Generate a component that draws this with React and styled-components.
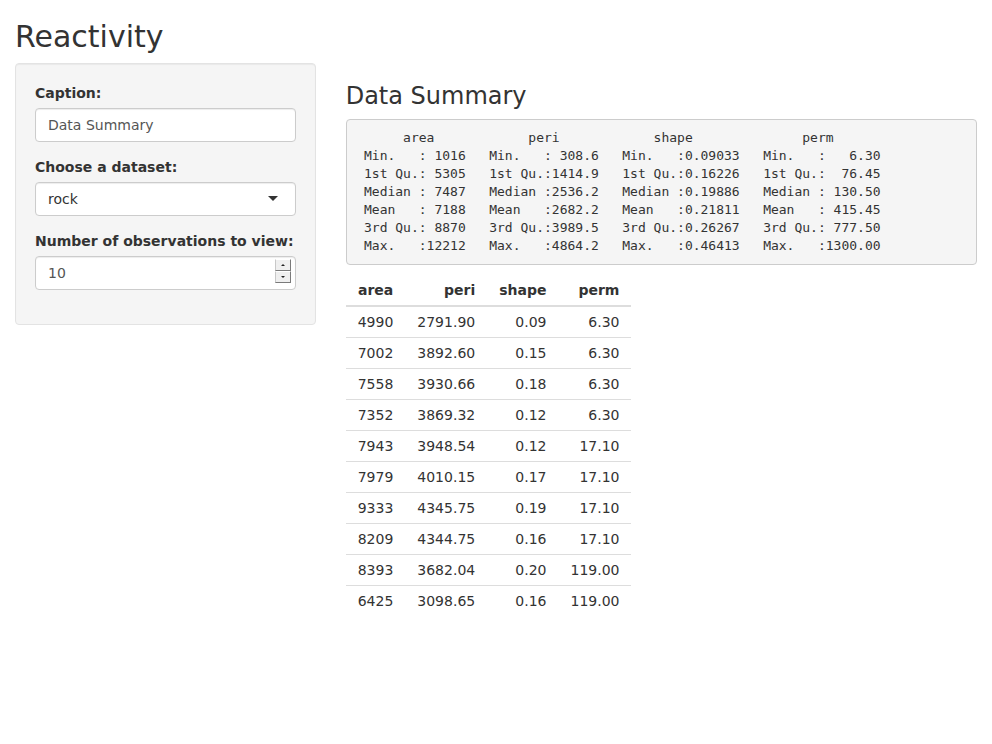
import React from 'react';
import styled, { createGlobalStyle } from 'styled-components';

const GlobalStyle = createGlobalStyle`
  * {
    box-sizing: border-box;
  }
  body {
    margin: 0;
    background: #fff;
    color: #333;
    font-family: "DejaVu Sans", "Liberation Sans", sans-serif;
    font-size: 14px;
    line-height: 1.42857143;
  }
`;

const summaryText = [
  '      area            peri            shape              perm        ',
  ' Min.   : 1016   Min.   : 308.6   Min.   :0.09033   Min.   :   6.30  ',
  ' 1st Qu.: 5305   1st Qu.:1414.9   1st Qu.:0.16226   1st Qu.:  76.45  ',
  ' Median : 7487   Median :2536.2   Median :0.19886   Median : 130.50  ',
  ' Mean   : 7188   Mean   :2682.2   Mean   :0.21811   Mean   : 415.45  ',
  ' 3rd Qu.: 8870   3rd Qu.:3989.5   3rd Qu.:0.26267   3rd Qu.: 777.50  ',
  ' Max.   :12212   Max.   :4864.2   Max.   :0.46413   Max.   :1300.00  ',
].join('\n');

const rows = [
  ['4990', '2791.90', '0.09', '6.30'],
  ['7002', '3892.60', '0.15', '6.30'],
  ['7558', '3930.66', '0.18', '6.30'],
  ['7352', '3869.32', '0.12', '6.30'],
  ['7943', '3948.54', '0.12', '17.10'],
  ['7979', '4010.15', '0.17', '17.10'],
  ['9333', '4345.75', '0.19', '17.10'],
  ['8209', '4344.75', '0.16', '17.10'],
  ['8393', '3682.04', '0.20', '119.00'],
  ['6425', '3098.65', '0.16', '119.00'],
];

const App = () => {
  return (
    <>
      <GlobalStyle />
      <Page>
        <Title>Reactivity</Title>
        <Row>
          <Column>
            <Well>
              <FormGroup>
                <Label>Caption:</Label>
                <TextInput type="text" defaultValue="Data Summary" />
              </FormGroup>
              <FormGroup>
                <Label>Choose a dataset:</Label>
                <SelectBox>
                  rock
                  <Caret />
                </SelectBox>
              </FormGroup>
              <FormGroup>
                <Label>Number of observations to view:</Label>
                <NumberWrap>
                  <TextInput type="number" defaultValue="10" />
                  <Spinner>
                    <SpinButton><SpinArrow up /></SpinButton>
                    <SpinButton><SpinArrow /></SpinButton>
                  </Spinner>
                </NumberWrap>
              </FormGroup>
            </Well>
          </Column>
          <Column>
            <SubTitle>Data Summary</SubTitle>
            <Pre>{summaryText}</Pre>
            <Table>
              <thead>
                <tr>
                  <th>area</th>
                  <th>peri</th>
                  <th>shape</th>
                  <th>perm</th>
                </tr>
              </thead>
              <tbody>
                {rows.map((r, i) => (
                  <tr key={i}>
                    {r.map((v, j) => (
                      <td key={j}>{v}</td>
                    ))}
                  </tr>
                ))}
              </tbody>
            </Table>
          </Column>
        </Row>
      </Page>
    </>
  );
};

export default App;

const Page = styled.div`
  padding: 0 15px;
`;

const Title = styled.h2`
  margin: 20px 0 10px;
  font-size: 30px;
  font-weight: 500;
  line-height: 1.1;
  color: #333;
`;

const Row = styled.div`
  display: grid;
  grid-template-columns: 1fr 2fr;
  margin: 0 -15px;
`;

const Column = styled.div`
  padding: 0 15px;
  min-width: 0;
`;

const Well = styled.div`
  background: #f5f5f5;
  border: 1px solid #e3e3e3;
  border-radius: 4px;
  padding: 19px;
  margin-bottom: 20px;
  box-shadow: inset 0 1px 1px rgba(0, 0, 0, 0.05);
`;

const FormGroup = styled.div`
  margin-bottom: 15px;
`;

const Label = styled.label`
  display: block;
  margin-bottom: 5px;
  font-weight: 700;
`;

const TextInput = styled.input`
  display: block;
  width: 100%;
  height: 34px;
  padding: 6px 12px;
  font-family: inherit;
  font-size: 14px;
  line-height: 1.42857143;
  color: #555;
  background: #fff;
  border: 1px solid #ccc;
  border-radius: 4px;
  box-shadow: inset 0 1px 1px rgba(0, 0, 0, 0.075);
  outline: none;
  -moz-appearance: textfield;

  &::-webkit-inner-spin-button,
  &::-webkit-outer-spin-button {
    -webkit-appearance: none;
    margin: 0;
  }
`;

const SelectBox = styled.div`
  position: relative;
  height: 34px;
  padding: 6px 12px;
  color: #333;
  background: #fff;
  border: 1px solid #ccc;
  border-radius: 4px;
  box-shadow: inset 0 1px 1px rgba(0, 0, 0, 0.075);
`;

const Caret = styled.span`
  position: absolute;
  top: 50%;
  right: 17px;
  margin-top: -3px;
  width: 0;
  height: 0;
  border-style: solid;
  border-width: 5px 5px 0 5px;
  border-color: #333 transparent transparent transparent;
`;

const NumberWrap = styled.div`
  position: relative;
`;

const Spinner = styled.div`
  position: absolute;
  top: 3px;
  right: 5px;
  width: 16px;
  display: flex;
  flex-direction: column;
`;

const SpinButton = styled.div`
  height: 12px;
  display: flex;
  align-items: center;
  justify-content: center;
  background: #efefef;
  border-top: 1px solid #fff;
  border-left: 1px solid #c8c8c8;
  border-right: 1px solid #7a7a7a;
  border-bottom: 1px solid #7a7a7a;
`;

const SpinArrow = styled.span`
  width: 0;
  height: 0;
  border-style: solid;
  border-width: ${p => (p.up ? '0 2px 2px 2px' : '2px 2px 0 2px')};
  border-color: ${p =>
    p.up ? 'transparent transparent #222 transparent' : '#222 transparent transparent transparent'};
`;

const SubTitle = styled.h3`
  margin: 20px 0 10px;
  font-size: 24px;
  font-weight: 500;
  line-height: 1.1;
  color: #333;
`;

const Pre = styled.pre`
  display: block;
  margin: 0 0 10px;
  padding: 9px 9.5px;
  font-family: "DejaVu Sans Mono", "Liberation Mono", monospace;
  font-size: 13px;
  line-height: 18px;
  color: #333;
  background: #f5f5f5;
  border: 1px solid #ccc;
  border-radius: 4px;
  white-space: pre;
  overflow: hidden;
`;

const Table = styled.table`
  border-collapse: collapse;
  border-spacing: 0;
  width: auto;

  th,
  td {
    padding: 5px 12px;
    line-height: 20px;
    text-align: right;
    vertical-align: top;
  }

  th {
    font-weight: 700;
    border-bottom: 2px solid #ddd;
  }

  td {
    border-top: 1px solid #ddd;
  }
`;
